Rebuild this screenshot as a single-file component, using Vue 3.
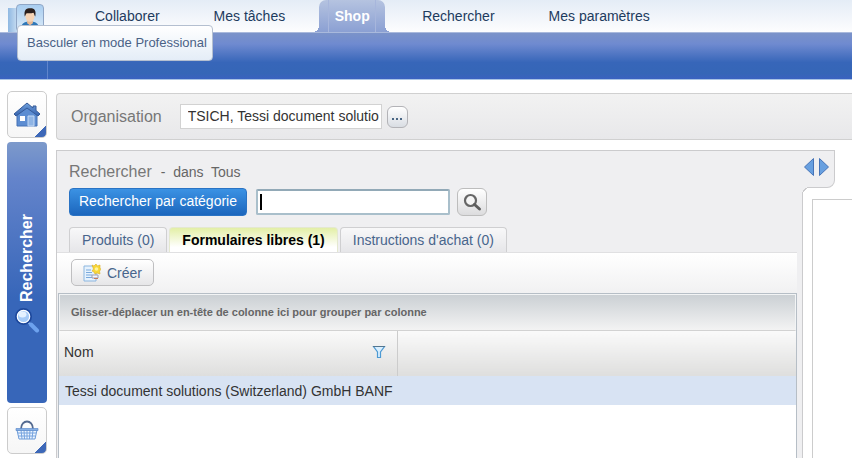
<script setup>
import { ref } from 'vue'

const organisation = ref('TSICH, Tessi document solutio')
const query = ref('')
const results = ref(['Tessi document solutions (Switzerland) GmbH BANF'])
</script>

<template>
  <div class="page">
    <header class="top">
      <button class="profile" type="button" aria-label="Profil">
        <svg class="avatar" viewBox="0 0 26 27" aria-hidden="true">
          <path d="M3 27c0-6 3-9 7-9.500h6c4 .5 7 3.500 7 9.500z" fill="#2f78b8" />
          <path d="M10 16h6v3l-3 2-3-2z" fill="#e8b994" />
          <ellipse cx="13" cy="11.500" rx="4.800" ry="6" fill="#f6d3b4" />
          <path d="M7.500 12C6.500 5 9 3.500 13.500 3.500S19.500 6 18.500 12c-1-1-1-3-2-4-3 1-5 .3-7 .6C8.500 9.500 8.500 11 7.500 12z" fill="#2b201d" />
        </svg>
      </button>
      <nav class="menu">
        <a href="#" class="entry first">Collaborer</a>
        <a href="#" class="entry second">Mes tâches</a>
        <a href="#" class="entry current"><span>Shop</span></a>
        <a href="#" class="entry fourth">Rechercher</a>
        <a href="#" class="entry fifth">Mes paramètres</a>
      </nav>
      <div class="hint" role="tooltip">Basculer en mode Professional</div>
    </header>
    <div class="band"><div class="band-start"></div></div>

    <div class="body">
      <aside class="side">
        <button class="tile" type="button" aria-label="Accueil">
          <svg width="28" height="26" viewBox="0 0 28 26" aria-hidden="true">
            <defs>
              <linearGradient id="roof" x1="0" y1="0" x2="0" y2="1">
                <stop offset="0" stop-color="#6fa0dc" />
                <stop offset="1" stop-color="#3562ae" />
              </linearGradient>
            </defs>
            <path d="M4 12h20v12H4z" fill="#5c8dd2" stroke="#4570b4" />
            <path d="M4 13L14 4l10 9z" fill="#5c8dd2" />
            <path d="M14 1L1 12l2 2 11-8 11 8 2-2-4-3.500V4h-3v2z" fill="url(#roof)" stroke="#355a98" />
            <path d="M7 14h5v5H7z" fill="#fff" />
            <path d="M15 14h6v10h-6z" fill="#8fb4e4" stroke="#c3d8f3" />
          </svg>
        </button>
        <button class="side-current" type="button">
          <span class="side-label">Rechercher</span>
          <svg width="26" height="26" viewBox="0 0 26 26" aria-hidden="true">
            <path d="M14 15l3 3" stroke="#a8c4ee" stroke-width="2" />
            <path d="M17 17.500l6 6" stroke="#6da2ee" stroke-width="4" stroke-linecap="round" />
            <circle cx="9.500" cy="9.500" r="7.500" fill="#84b2ef" stroke="#1d489c" stroke-width="2" />
            <circle cx="9.500" cy="9.500" r="6.200" fill="#a6cbf7" stroke="#fff" stroke-width="1.200" />
            <ellipse cx="8.500" cy="7.500" rx="4" ry="3" fill="#e5f2ff" />
          </svg>
        </button>
        <button class="tile" type="button" aria-label="Panier">
          <svg width="24" height="21" viewBox="0 0 24 21" aria-hidden="true">
            <path d="M6 9C6-1 18-1 18 9" fill="none" stroke="#53698f" stroke-width="1.800" />
            <path d="M2 10h20l-2 9H4z" fill="#edf5ff" stroke="#6b9ad8" />
            <path d="M3 13h18M3.500 16h17M6 10l1 9M9 10l.5 9M12 10v9M15 10l-.5 9M18 10l-1 9" stroke="#76a4df" fill="none" />
            <path d="M1 8.500h22v2H1z" fill="#88b0e4" stroke="#5e8ccb" stroke-width=".7" />
          </svg>
        </button>
      </aside>

      <main class="main">
        <section class="org">
          <label class="heading" for="org">Organisation</label>
          <input id="org" v-model="organisation" class="org-input" type="text" />
          <button class="more" type="button" aria-label="Choisir">
            <svg width="12" height="3" viewBox="0 0 12 3" aria-hidden="true">
              <path d="M1 0h2v2H1zM5 0h2v2H5zM9 0h2v2H9z" fill="#4a6684" />
            </svg>
          </button>
        </section>

        <div class="work">
          <section class="panel">
            <div class="finder">
              <div class="title">
                <span class="heading">Rechercher</span>
                <span class="scope">- &nbsp;dans&nbsp; Tous</span>
              </div>
              <div class="search">
                <button class="category" type="button">Rechercher par catégorie</button>
                <div class="field">
                  <input v-model="query" type="text" aria-label="Texte" />
                  <span v-if="!query" class="caret"></span>
                </div>
                <button class="go" type="button" aria-label="Rechercher">
                  <svg width="20" height="20" viewBox="0 0 20 20" aria-hidden="true">
                    <circle cx="8.500" cy="8.500" r="5.500" fill="#f5f5f5" stroke="#666" stroke-width="2.200" />
                    <path d="M12.500 12.500l5 4.500" stroke="#5d5d5d" stroke-width="3" stroke-linecap="round" />
                  </svg>
                </button>
              </div>
              <div class="tabs">
                <button class="tab" type="button">Produits (0)</button>
                <button class="tab active" type="button">Formulaires libres (1)</button>
                <button class="tab" type="button">Instructions d'achat (0)</button>
              </div>
            </div>
            <div class="content">
              <div class="toolbar">
                <button class="create" type="button">
                  <svg width="18" height="18" viewBox="0 0 18 18" aria-hidden="true">
                    <path d="M1 2h9l3 3v12H1z" fill="#e6f2fd" stroke="#8cb6df" />
                    <path d="M3 6h5M3 8.500h6M3 11h6M3 13.500h6" stroke="#79a9dc" />
                    <path d="M9 1l2 1 2-2 1.500 2L17 1v3l1 1.500L16.500 7l.5 3-3-1-2 1-1-2-2-1 1.500-2z" fill="#f8d737" stroke="#dcae25" stroke-width=".6" />
                    <circle cx="13.500" cy="5" r="1.800" fill="#fff49a" />
                    <path d="M9 11h6v3H9z" fill="#f6f6fb" stroke="#999db4" />
                    <path d="M11 14.500h4" stroke="#c77a58" />
                  </svg>
                  <span>Créer</span>
                </button>
              </div>
              <div class="grid">
                <div class="grouping">Glisser-déplacer un en-tête de colonne ici pour grouper par colonne</div>
                <table>
                  <thead>
                    <tr>
                      <th class="name">
                        <div class="name-cell">
                          <span>Nom</span>
                          <svg width="14" height="14" viewBox="0 0 14 14" aria-hidden="true">
                            <path d="M1.500 1.500h11L8.500 7v5.500h-3V7z" fill="#d9efff" stroke="#4d9ad3" stroke-width="1.200" />
                            <path d="M1 1.500h12" stroke="#54768f" />
                          </svg>
                        </div>
                      </th>
                      <th></th>
                    </tr>
                  </thead>
                  <tbody>
                    <tr v-for="row in results" :key="row">
                      <td colspan="2">{{ row }}</td>
                    </tr>
                  </tbody>
                </table>
              </div>
            </div>
          </section>

          <div class="detail">
            <div class="handle">
              <button type="button" aria-label="Réduire">
                <svg width="10" height="18" viewBox="0 0 10 18" aria-hidden="true">
                  <path d="M9.500 .5v17L.5 9z" fill="#68a0e0" stroke="#4674b8" />
                </svg>
              </button>
              <button type="button" aria-label="Agrandir">
                <svg width="10" height="18" viewBox="0 0 10 18" aria-hidden="true">
                  <path d="M.5 .5v17l9-8.500z" fill="#68a0e0" stroke="#4674b8" />
                </svg>
              </button>
            </div>
            <div class="preview"></div>
          </div>
        </div>
      </main>
    </div>
  </div>
</template>

<style>
html,
body {
  background: #fff;
}
</style>

<style scoped>
.page,
.page * {
  box-sizing: border-box;
}
.page {
  display: flex;
  flex-direction: column;
  min-height: 100vh;
  font: 14px/18px "Liberation Sans", Arial, sans-serif;
  color: #333;
}
button,
input {
  font: inherit;
  margin: 0;
  padding: 0;
  border: 0;
  background: none;
}
button {
  cursor: pointer;
}
svg {
  display: block;
  flex: none;
}

.top {
  position: relative;
  display: flex;
  height: 32px;
  padding-left: 8px;
  background: linear-gradient(#e4ecf6, #fdfdfe);
}
.profile {
  display: flex;
  align-items: flex-end;
  width: 36px;
  margin-top: 4px;
  padding-left: 8px;
  background: linear-gradient(90deg, #8fb8e2, #c6dcf1) no-repeat 0 4px / 9px 24px;
}
.avatar {
  width: 28px;
  height: 28px;
  border: 1px solid #8fa6c6;
  border-radius: 4px;
  background: linear-gradient(#a8cdf0, #dcebf8);
}
.menu {
  display: flex;
  margin-left: 51px;
}
.entry {
  display: flex;
  align-items: center;
  color: #1d3b5e;
  text-decoration: none;
}
.second {
  margin-left: 54px;
}
.current {
  position: relative;
  justify-content: center;
  width: 66px;
  margin-left: 34px;
  border-radius: 7px 7px 0 0;
  background: linear-gradient(#b5c3e0, #8ba0d3);
  color: #fff;
  font-weight: bold;
}
.current span {
  display: flex;
  align-items: center;
  justify-content: center;
  width: 48px;
  height: 100%;
  border: solid #a7b6dc;
  border-width: 0 1px;
}
.current::before,
.current::after {
  content: "";
  position: absolute;
  bottom: 0;
  width: 6px;
  height: 6px;
}
.current::before {
  right: 100%;
  background: radial-gradient(circle at 0 0, transparent 6px, #8ba0d3 6px);
}
.current::after {
  left: 100%;
  background: radial-gradient(circle at 100% 0, transparent 6px, #8ba0d3 6px);
}
.fourth {
  margin-left: 37px;
}
.fifth {
  margin-left: 54px;
}
.hint {
  position: absolute;
  z-index: 2;
  left: 17px;
  top: 25px;
  padding: 8px 5px 8px 9px;
  border: 1px solid #b4bfd0;
  border-radius: 4px;
  background: linear-gradient(#fff, #e4edf7);
  color: #4a6286;
  font-size: 13px;
  line-height: 18px;
  white-space: nowrap;
}
.band {
  height: 48px;
  border-top: 1px solid #a9b9dc;
  border-bottom: 1px solid #a9c4e4;
  background: linear-gradient(#7b93c9, #6f8ad0 24%, #3766b9 64%, #3566b7 88%, #3a62c0);
}
.band-start {
  width: 48px;
  height: 100%;
  border-right: 1px solid #6085cc;
}

.body {
  display: flex;
  flex: 1;
  gap: 9px;
  padding-left: 7px;
}
.side {
  display: flex;
  flex-direction: column;
  gap: 4px;
  width: 40px;
  padding-top: 11px;
}
.tile {
  display: flex;
  align-items: center;
  justify-content: center;
  height: 47px;
  border: 1px solid #ccc;
  border-radius: 5px;
  background: linear-gradient(135deg, transparent 86%, #3d68b8 86%), linear-gradient(#fff, #f6f6f6);
}
.side-current {
  display: flex;
  flex-direction: column;
  align-items: center;
  gap: 5px;
  height: 261px;
  padding-top: 72px;
  border-radius: 4px;
  background: linear-gradient(#7d9acb, #6484cb 14%, #3766b9 60%);
}
.side-label {
  writing-mode: vertical-rl;
  transform: rotate(180deg);
  color: #fff;
  font-size: 16px;
  font-weight: bold;
}
.main {
  display: flex;
  flex: 1;
  flex-direction: column;
  gap: 10px;
  min-width: 0;
  padding-top: 13px;
}
.org {
  display: flex;
  align-items: center;
  height: 47px;
  padding-left: 14px;
  border: 1px solid #d0d0d0;
  border-right: 0;
  border-radius: 4px 0 0 4px;
  background: linear-gradient(#f2f2f2, #e8e8ea);
}
.heading {
  color: #777;
  font-size: 16px;
}
.org-input {
  width: 202px;
  height: 25px;
  margin: 0 5px 0 18px;
  padding: 0 0 1px 7px;
  border: 1px solid #d2d2d2;
  background: #fff;
  color: #333;
}
.more {
  display: flex;
  align-items: flex-end;
  justify-content: center;
  width: 21px;
  height: 22px;
  padding-bottom: 6px;
  border: 1px solid #b3b3b7;
  border-radius: 6px;
  background: linear-gradient(#fff, #d9dde3);
}
.work {
  display: flex;
  flex: 1;
}
.panel {
  display: flex;
  flex: 1;
  flex-direction: column;
  min-width: 0;
  border: solid #cbcbcd;
  border-width: 1px 0 0 1px;
  background: #efeff1;
}
.finder {
  padding: 12px 12px 0;
}
.title {
  display: flex;
  align-items: baseline;
  gap: 9px;
}
.scope {
  color: #666;
}
.search {
  display: flex;
  align-items: center;
  margin-top: 7px;
}
.category {
  height: 28px;
  padding: 0 9px 2px;
  border: 1px solid #2a73c4;
  border-radius: 4px;
  background: linear-gradient(#3b92e4, #1c66bd);
  color: #fff;
  white-space: nowrap;
}
.field {
  position: relative;
  width: 194px;
  margin: 0 7px 0 9px;
}
.field input {
  display: block;
  width: 100%;
  height: 26px;
  padding: 0 4px;
  border: 2px solid #a9bfcb;
  border-top-color: #92a9b7;
  border-radius: 2px;
  background: #fff;
}
.caret {
  position: absolute;
  left: 4px;
  top: 5px;
  width: 2px;
  height: 16px;
  background: #000;
}
.go {
  display: flex;
  align-items: center;
  justify-content: center;
  width: 30px;
  height: 28px;
  border: 1px solid #bdbdbd;
  border-radius: 6px;
  background: linear-gradient(#fff, #dcdcde);
}
.tabs {
  display: flex;
  gap: 2px;
  margin-top: 11px;
}
.tab {
  height: 25px;
  padding: 0 12px 1px;
  border: 1px solid #cfcfd1;
  border-bottom: 0;
  border-radius: 4px 4px 0 0;
  background: linear-gradient(#f8f8f9, #e6e6e9);
  color: #48658c;
  white-space: nowrap;
}
.tab.active {
  border-color: #e4e8d0;
  background: linear-gradient(#e3efa6, #fff 80%);
  color: #000;
  font-weight: bold;
}
.content {
  display: flex;
  flex: 1;
  flex-direction: column;
  margin-right: 5px;
  border-top: 1px solid #e0e0e2;
}
.toolbar {
  height: 40px;
  padding: 6px 14px;
  background: linear-gradient(#fff, #f1f1f2);
}
.create {
  display: flex;
  align-items: center;
  gap: 6px;
  height: 27px;
  padding: 0 11px;
  border: 1px solid #bfbfc1;
  border-radius: 5px;
  background: linear-gradient(#fff, #e6e6e8);
  color: #48658c;
}
.grid {
  flex: 1;
  border: solid #b6bec6;
  border-width: 1px 1px 0;
  margin-left: 1px;
  background: #fff;
}
.grouping {
  height: 37px;
  padding: 8px 11px 0;
  border: 1px solid #f2f4f5;
  border-bottom-color: #d2d2d2;
  background: linear-gradient(#cbd0d4, #f3f3f3);
  color: #666;
  font-size: 11px;
  font-weight: bold;
}
table {
  width: 100%;
  border-collapse: collapse;
  table-layout: fixed;
}
th {
  height: 45px;
  padding: 0;
  background: linear-gradient(#fafafa, #dededd);
  font-weight: normal;
  text-align: left;
}
.name {
  width: 338px;
  border-right: 1px solid #ccc;
}
.name-cell {
  display: flex;
  align-items: center;
  justify-content: space-between;
  padding: 0 11px 3px 5px;
}
td {
  height: 29px;
  padding: 0 6px;
  background: #d8e3f3;
}
.detail {
  display: flex;
  flex-direction: column;
  width: 50px;
  background: linear-gradient(#cbcbcd, #cbcbcd) no-repeat 0 38px / 1px 100%;
}
.handle {
  position: relative;
  display: flex;
  justify-content: center;
  gap: 5px;
  width: 33px;
  height: 38px;
  padding: 7px 3px 0 0;
  border: solid #cbcbcd;
  border-width: 1px 1px 1px 0;
  border-radius: 0 0 8px 0;
  background: #efeff1;
}
.handle::after {
  content: "";
  position: absolute;
  left: 0;
  top: 100%;
  width: 8px;
  height: 8px;
  background: radial-gradient(circle at 100% 100%, #fff 7px, #cbcbcd 7px, #cbcbcd 8px, #efeff1 8px);
}
.handle button {
  height: 18px;
}
.preview {
  flex: 1;
  margin: 11px 0 0 10px;
  border: solid #ccc;
  border-width: 1px 0 0 1px;
}
</style>
